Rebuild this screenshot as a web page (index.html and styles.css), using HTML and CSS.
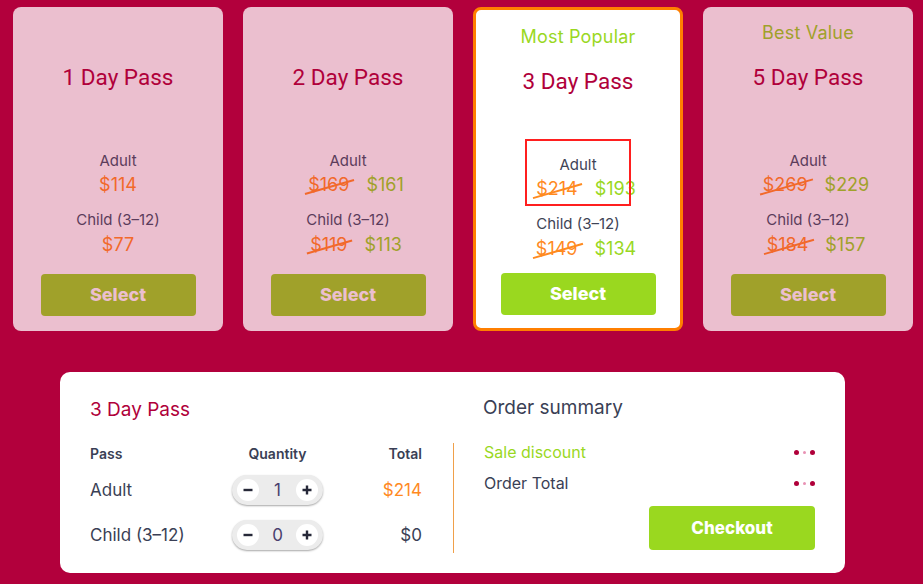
FILE: index.html
```html
<!DOCTYPE html>
<html>
<head>
<meta charset="utf-8">
<link rel="stylesheet" href="styles.css">
</head>
<body>
<div class="cards">
  <div class="card">
    <div class="tag"></div>
    <h2 class="title">1 Day Pass</h2>
    <div class="prices">
      <div class="ptype">Adult</div>
      <div class="prow single"><span class="only">$114</span></div>
      <div class="ptype child">Child (3–12)</div>
      <div class="prow single"><span class="only">$77</span></div>
    </div>
    <button class="select">Select</button>
  </div>
  <div class="card">
    <div class="tag"></div>
    <h2 class="title">2 Day Pass</h2>
    <div class="prices">
      <div class="ptype">Adult</div>
      <div class="prow"><span class="old">$169</span><span class="now">$161</span></div>
      <div class="ptype child">Child (3–12)</div>
      <div class="prow"><span class="old">$119</span><span class="now">$113</span></div>
    </div>
    <button class="select">Select</button>
  </div>
  <div class="card featured">
    <div class="tag popular">Most Popular</div>
    <h2 class="title">3 Day Pass</h2>
    <div class="prices">
      <div class="ptype">Adult</div>
      <div class="prow"><span class="old">$214</span><span class="now">$193</span></div>
      <div class="ptype child">Child (3–12)</div>
      <div class="prow"><span class="old">$149</span><span class="now">$134</span></div>
    </div>
    <button class="select">Select</button>
    <div class="highlight"></div>
  </div>
  <div class="card">
    <div class="tag value">Best Value</div>
    <h2 class="title">5 Day Pass</h2>
    <div class="prices">
      <div class="ptype">Adult</div>
      <div class="prow"><span class="old">$269</span><span class="now">$229</span></div>
      <div class="ptype child">Child (3–12)</div>
      <div class="prow"><span class="old">$184</span><span class="now">$157</span></div>
    </div>
    <button class="select">Select</button>
  </div>
</div>

<div class="summary">
  <h3 class="sum-title pass-title">3 Day Pass</h3>
  <h3 class="sum-title order-title">Order summary</h3>
  <div class="table">
    <div class="thead">
      <span>Pass</span><span class="center">Quantity</span><span class="right">Total</span>
    </div>
    <div class="trow">
      <span>Adult</span>
      <div class="stepper">
        <span class="sbtn"><svg width="12" height="12" viewBox="0 0 12 12"><path d="M1.5 6h9" stroke="#262838" stroke-width="2.4"/></svg></span>
        <span class="qty">1</span>
        <span class="sbtn"><svg width="12" height="12" viewBox="0 0 12 12"><path d="M1.5 6h9M6 1.5v9" stroke="#262838" stroke-width="2.4"/></svg></span>
      </div>
      <span class="right total-orange">$214</span>
    </div>
    <div class="trow">
      <span>Child (3–12)</span>
      <div class="stepper">
        <span class="sbtn"><svg width="12" height="12" viewBox="0 0 12 12"><path d="M1.5 6h9" stroke="#262838" stroke-width="2.4"/></svg></span>
        <span class="qty">0</span>
        <span class="sbtn"><svg width="12" height="12" viewBox="0 0 12 12"><path d="M1.5 6h9M6 1.5v9" stroke="#262838" stroke-width="2.4"/></svg></span>
      </div>
      <span class="right">$0</span>
    </div>
  </div>
  <div class="order">
    <div class="srow discount"><span>Sale discount</span><span class="dots"><i></i><i class="mid"></i><i></i></span></div>
    <div class="srow total"><span>Order Total</span><span class="dots"><i></i><i class="mid"></i><i></i></span></div>
    <button class="checkout">Checkout</button>
  </div>
</div>
</body>
</html>
```

FILE: styles.css
```css
* { box-sizing: border-box; }

body {
  margin: 0;
  padding: 7px 10px 0 13px;
  background: #b2003c;
  font-family: "Inter", "DejaVu Sans", sans-serif;
  color: #3a3f55;
}

.cards {
  display: grid;
  grid-template-columns: repeat(4, 210px);
  column-gap: 20px;
}

.card {
  position: relative;
  height: 324px;
  background: #ebbfcf;
  border-radius: 8px;
  padding: 14px 0 15px;
  display: flex;
  flex-direction: column;
  align-items: center;
  text-align: center;
  color: #5b3c5b;
}

.card.featured {
  background: #fff;
  border: 3px solid #ff7f00;
  padding: 15px 0 13px;
  color: #3f4456;
}

.tag {
  height: 24px;
  font-size: 18px;
  line-height: 24px;
  letter-spacing: 0.2px;
}
.tag.popular { color: #9ad81f; }
.tag.value { color: #a0a12a; }

.title {
  margin: 17px 0 0;
  font: 400 22.5px/30px "Roboto", sans-serif;
  color: #b0003a;
}

.prices {
  margin-top: 59px;
  width: 100%;
}

.ptype {
  font-size: 15px;
  line-height: 20px;
}
.ptype.child { margin-top: 13px; }

.prow {
  display: flex;
  justify-content: center;
  gap: 17px;
  padding-left: 16px;
  margin-top: 2px;
  font-size: 18px;
  line-height: 24px;
}
.ptype.child + .prow { margin-top: 3px; }
.prow.single { padding-left: 0; }

.only { color: #f2692a; }
.now { color: #a0a12a; }
.featured .now { color: #9ad81f; }

.old {
  position: relative;
  color: #f2692a;
}
.featured .old { color: #ff8a1f; }
.old::after {
  content: "";
  position: absolute;
  left: -4px;
  right: -6px;
  top: 13px;
  height: 2px;
  background: currentColor;
  transform: rotate(-16deg);
}

.select {
  margin-top: auto;
  width: 155px;
  height: 42px;
  border: 0;
  border-radius: 4px;
  background: #a0a12a;
  color: #ebbfcf;
  font: 800 18px "Inter", sans-serif;
  padding: 0 0 2px;
}
.featured .select {
  background: #9ad81f;
  color: #fff;
}

.highlight {
  position: absolute;
  left: 49px;
  top: 129px;
  width: 106px;
  height: 67px;
  border: 2px solid #ff1f1f;
}

.summary {
  margin: 41px 0 0 47px;
  width: 785px;
  background: #fff;
  border-radius: 10px;
  padding: 24px 30px 20px;
  display: grid;
  grid-template-columns: 332px 1fr;
  column-gap: 31px;
  row-gap: 19px;
}

.sum-title {
  margin: 0;
  font-size: 19px;
  font-weight: 400;
  line-height: 28px;
}
.pass-title { color: #b0003a; }
.order-title { padding-left: 30px; line-height: 24px; color: #3a3f55; }

.table { padding-bottom: 3px; }

.thead, .trow {
  display: grid;
  grid-template-columns: 142px 91px 1fr;
  align-items: center;
}
.thead {
  height: 20px;
  font-size: 14px;
  font-weight: 600;
}
.trow {
  height: 30px;
  margin-top: 12px;
  font-size: 17px;
}
.trow + .trow { margin-top: 15px; }

.center { text-align: center; }
.right { text-align: right; }
.total-orange { color: #ff8a1f; }

.stepper {
  width: 91px;
  height: 30px;
  border-radius: 15px;
  background: #ececec;
  box-shadow: 0 1px 2px rgba(0, 0, 0, 0.35);
  padding: 0 5px;
  display: flex;
  align-items: center;
  justify-content: space-between;
}
.sbtn {
  width: 22px;
  height: 22px;
  border-radius: 50%;
  background: #fff;
  display: flex;
  align-items: center;
  justify-content: center;
}
.qty {
  font-size: 17px;
  color: #4a3f6e;
}

.order {
  border-left: 1px solid #f0a04a;
  padding-left: 30px;
  display: flex;
  flex-direction: column;
}
.srow {
  display: flex;
  justify-content: space-between;
  align-items: center;
  font-size: 16px;
  line-height: 18px;
}
.srow.discount { color: #9ad81f; }
.srow.total { margin-top: 13px; }

.dots {
  display: flex;
  align-items: center;
  gap: 4px;
}
.dots i {
  width: 5px;
  height: 5px;
  border-radius: 50%;
  background: #b0003a;
}
.dots i.mid {
  width: 3px;
  height: 3px;
  background: #e892b4;
}

.checkout {
  margin-top: 14px;
  align-self: flex-end;
  width: 166px;
  height: 44px;
  border: 0;
  border-radius: 4px;
  background: #9ad81f;
  color: #fff;
  font: 800 17px "Inter", sans-serif;
}
```
